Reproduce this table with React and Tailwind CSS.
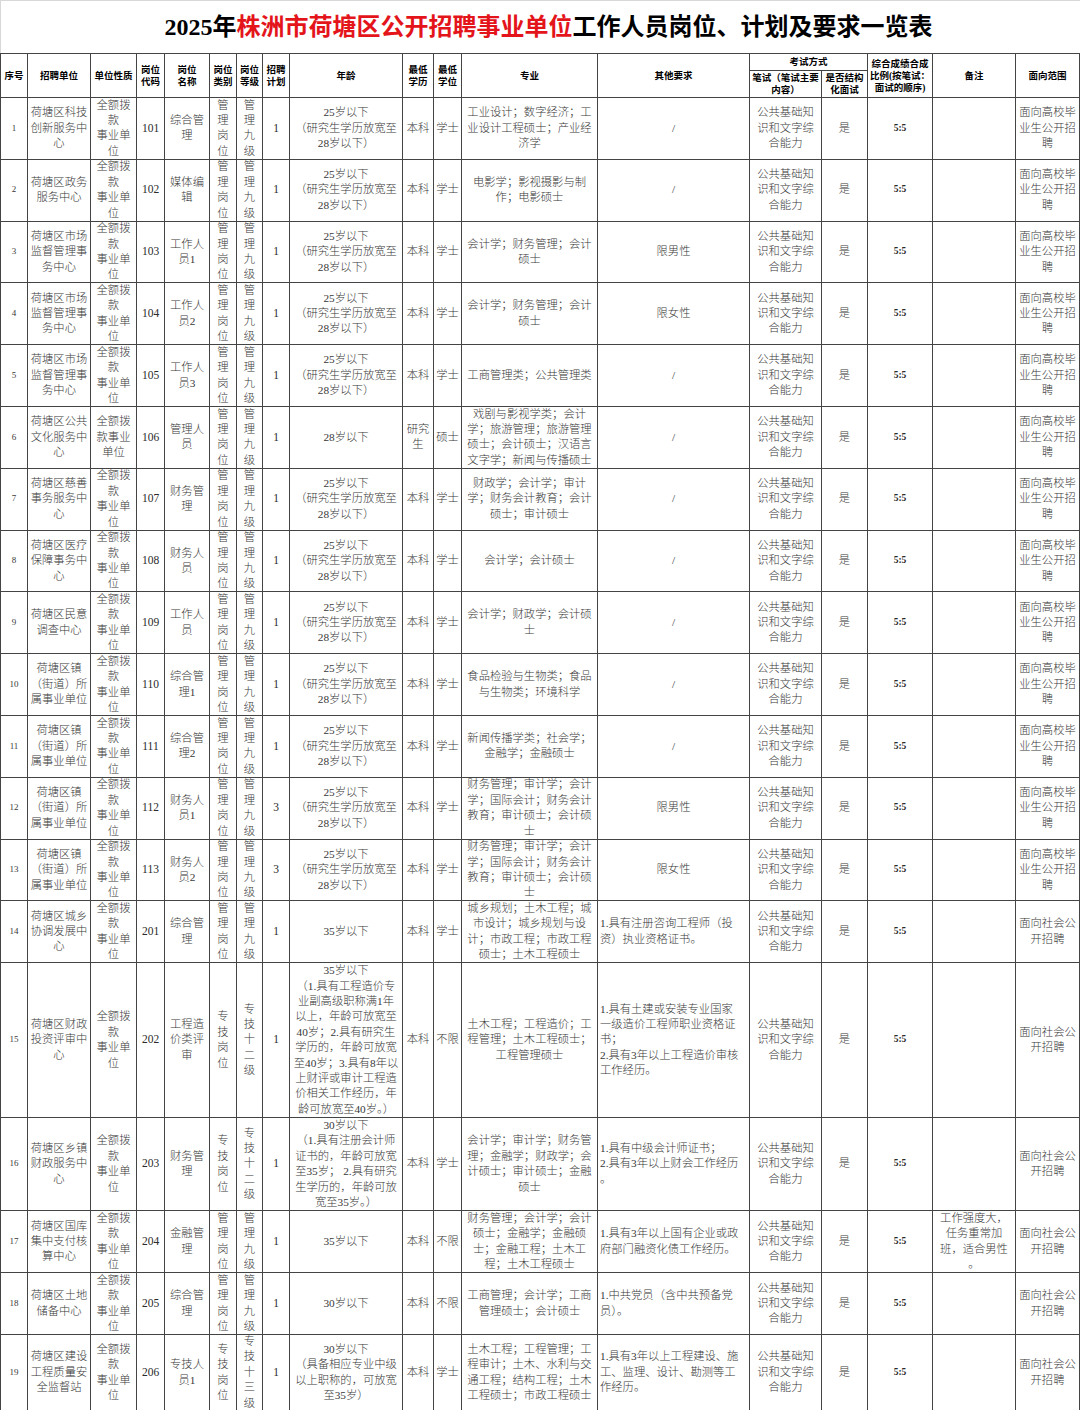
import React from "react";

const FULL = "全额拨\n款\n事业单\n位";
const GL = "管\n理\n岗\n位";
const GJ = "管\n理\n九\n级";
const ZJ = "专\n技\n岗\n位";
const ZJ12 = "专\n技\n十\n二\n级";
const ZJ13 = "专\n技\n十\n三\n级";
const AGE25 = "25岁以下\n（研究生学历放宽至\n28岁以下）";
const EXAM = "公共基础知\n识和文字综\n合能力";
const GX = "面向高校毕\n业生公开招\n聘";
const SH = "面向社会公\n开招聘";
const SCX = "荷塘区市场\n监督管理事\n务中心";
const JD = "荷塘区镇\n（街道）所\n属事业单位";
const CW = "财务管理；审计学；会计\n学；国际会计；财务会计\n教育；审计硕士；会计硕\n士";

const rows = [
  ["1", "荷塘区科技\n创新服务中\n心", FULL, "101", "综合管\n理", GL, GJ, "1", AGE25, "本科", "学士", "工业设计；数字经济；工\n业设计工程硕士；产业经\n济学", "/", EXAM, "是", "5:5", "", GX],
  ["2", "荷塘区政务\n服务中心", FULL, "102", "媒体编\n辑", GL, GJ, "1", AGE25, "本科", "学士", "电影学；影视摄影与制\n作；电影硕士", "/", EXAM, "是", "5:5", "", GX],
  ["3", SCX, FULL, "103", "工作人\n员1", GL, GJ, "1", AGE25, "本科", "学士", "会计学；财务管理；会计\n硕士", "限男性", EXAM, "是", "5:5", "", GX],
  ["4", SCX, FULL, "104", "工作人\n员2", GL, GJ, "1", AGE25, "本科", "学士", "会计学；财务管理；会计\n硕士", "限女性", EXAM, "是", "5:5", "", GX],
  ["5", SCX, FULL, "105", "工作人\n员3", GL, GJ, "1", AGE25, "本科", "学士", "工商管理类；公共管理类", "/", EXAM, "是", "5:5", "", GX],
  ["6", "荷塘区公共\n文化服务中\n心", "全额拨\n款事业\n单位", "106", "管理人\n员", GL, GJ, "1", "28岁以下", "研究\n生", "硕士", "戏剧与影视学类；会计\n学；旅游管理；旅游管理\n硕士；会计硕士；汉语言\n文字学；新闻与传播硕士", "/", EXAM, "是", "5:5", "", GX],
  ["7", "荷塘区慈善\n事务服务中\n心", FULL, "107", "财务管\n理", GL, GJ, "1", AGE25, "本科", "学士", "财政学；会计学；审计\n学；财务会计教育；会计\n硕士；审计硕士", "/", EXAM, "是", "5:5", "", GX],
  ["8", "荷塘区医疗\n保障事务中\n心", FULL, "108", "财务人\n员", GL, GJ, "1", AGE25, "本科", "学士", "会计学；会计硕士", "/", EXAM, "是", "5:5", "", GX],
  ["9", "荷塘区民意\n调查中心", FULL, "109", "工作人\n员", GL, GJ, "1", AGE25, "本科", "学士", "会计学；财政学；会计硕\n士", "/", EXAM, "是", "5:5", "", GX],
  ["10", JD, FULL, "110", "综合管\n理1", GL, GJ, "1", AGE25, "本科", "学士", "食品检验与生物类；食品\n与生物类；环境科学", "/", EXAM, "是", "5:5", "", GX],
  ["11", JD, FULL, "111", "综合管\n理2", GL, GJ, "1", AGE25, "本科", "学士", "新闻传播学类；社会学；\n金融学；金融硕士", "/", EXAM, "是", "5:5", "", GX],
  ["12", JD, FULL, "112", "财务人\n员1", GL, GJ, "3", AGE25, "本科", "学士", CW, "限男性", EXAM, "是", "5:5", "", GX],
  ["13", JD, FULL, "113", "财务人\n员2", GL, GJ, "3", AGE25, "本科", "学士", CW, "限女性", EXAM, "是", "5:5", "", GX],
  ["14", "荷塘区城乡\n协调发展中\n心", FULL, "201", "综合管\n理", GL, GJ, "1", "35岁以下", "本科", "学士", "城乡规划；土木工程；城\n市设计；城乡规划与设\n计；市政工程；市政工程\n硕士；土木工程硕士", "1.具有注册咨询工程师（投\n资）执业资格证书。", EXAM, "是", "5:5", "", SH, true],
  ["15", "荷塘区财政\n投资评审中\n心", FULL, "202", "工程造\n价类评\n审", ZJ, ZJ12, "1", "35岁以下\n（1.具有工程造价专\n业副高级职称满1年\n以上，年龄可放宽至\n40岁；2.具有研究生\n学历的，年龄可放宽\n至40岁；3.具有8年以\n上财评或审计工程造\n价相关工作经历，年\n龄可放宽至40岁。）", "本科", "不限", "土木工程；工程造价；工\n程管理；土木工程硕士；\n工程管理硕士", "1.具有土建或安装专业国家\n一级造价工程师职业资格证\n书；\n2.具有3年以上工程造价审核\n工作经历。", EXAM, "是", "5:5", "", SH, true],
  ["16", "荷塘区乡镇\n财政服务中\n心", FULL, "203", "财务管\n理", ZJ, ZJ12, "1", "30岁以下\n（1.具有注册会计师\n证书的，年龄可放宽\n至35岁； 2.具有研究\n生学历的，年龄可放\n宽至35岁。）", "本科", "学士", "会计学；审计学；财务管\n理；金融学；财政学；会\n计硕士；审计硕士；金融\n硕士", "1.具有中级会计师证书；\n2.具有3年以上财会工作经历\n。", EXAM, "是", "5:5", "", SH, true],
  ["17", "荷塘区国库\n集中支付核\n算中心", FULL, "204", "金融管\n理", GL, GJ, "1", "35岁以下", "本科", "不限", "财务管理；会计学；会计\n硕士；金融学；金融硕\n士；金融工程；土木工\n程；土木工程硕士", "1.具有3年以上国有企业或政\n府部门融资化债工作经历。", EXAM, "是", "5:5", "工作强度大，\n任务重常加\n班，适合男性\n。", SH, true],
  ["18", "荷塘区土地\n储备中心", FULL, "205", "综合管\n理", GL, GJ, "1", "30岁以下", "本科", "不限", "工商管理；会计学；工商\n管理硕士；会计硕士", "1.中共党员（含中共预备党\n员）。", EXAM, "是", "5:5", "", SH, true],
  ["19", "荷塘区建设\n工程质量安\n全监督站", FULL, "206", "专技人\n员1", ZJ, ZJ13, "1", "30岁以下\n（具备相应专业中级\n以上职称的，可放宽\n至35岁）", "本科", "学士", "土木工程；工程管理；工\n程审计；土木、水利与交\n通工程；结构工程；土木\n工程硕士；市政工程硕士", "1.具有3年以上工程建设、施\n工、监理、设计、勘测等工\n作经历。", EXAM, "是", "5:5", "", SH, true],
];

const cellBase =
  "flex items-center justify-center text-center whitespace-pre overflow-hidden border-r border-b border-[#444]";
const hdr = cellBase + " text-[9.5px] leading-[12px] font-bold text-black";
const body = " text-[11.3px] leading-[15.4px] text-[#383838] font-light";

function BodyCell({ value, col, left }) {
  let cls = cellBase + body;
  if (col === 0) cls = cellBase + " border-l text-[9px] leading-[15.4px] text-[#383838]";
  if (col === 3 || col === 7) cls = cellBase + " text-[11.5px] leading-[15.4px] text-[#2a2a2a]";
  if (col === 15) cls = cellBase + " text-[9.5px] leading-[15.4px] font-semibold text-[#2a2a2a]";
  if (col === 12 && left)
    cls =
      "flex items-center justify-start text-left whitespace-pre overflow-hidden border-r border-b border-[#444] pl-[2px]" + body;
  return <div className={cls}>{value}</div>;
}

export default function App() {
  return (
    <div className="w-[1080px] h-[1410px] bg-white overflow-hidden font-['Liberation_Serif','Noto_Sans_CJK_SC',serif]">
      <div className="h-[53px] flex items-center justify-center pl-[16px] border-t border-l border-[#d8d8d8]">
        <h1 className="text-[24px] font-bold text-black">
          2025年<span className="text-[#e4141b]">株洲市荷塘区公开招聘事业单位</span>工作人员岗位、计划及要求一览表
        </h1>
      </div>
      <div className="grid grid-cols-[28px_63px_46px_28px_45px_27px_26px_27px_113px_31px_28px_136px_152px_72px_46px_65px_83px_64px] grid-rows-[18px_27px_repeat(14,61.8px)_155px_93px_62px_62px_75.8px]">
        <div className={hdr + " row-span-2 border-l border-t"}>序号</div>
        <div className={hdr + " row-span-2 border-t"}>招聘单位</div>
        <div className={hdr + " row-span-2 border-t"}>单位性质</div>
        <div className={hdr + " row-span-2 border-t"}>{"岗位\n代码"}</div>
        <div className={hdr + " row-span-2 border-t"}>{"岗位\n名称"}</div>
        <div className={hdr + " row-span-2 border-t"}>{"岗位\n类别"}</div>
        <div className={hdr + " row-span-2 border-t"}>{"岗位\n等级"}</div>
        <div className={hdr + " row-span-2 border-t"}>{"招聘\n计划"}</div>
        <div className={hdr + " row-span-2 border-t"}>年龄</div>
        <div className={hdr + " row-span-2 border-t"}>{"最低\n学历"}</div>
        <div className={hdr + " row-span-2 border-t"}>{"最低\n学位"}</div>
        <div className={hdr + " row-span-2 border-t"}>专业</div>
        <div className={hdr + " row-span-2 border-t"}>其他要求</div>
        <div className={hdr + " col-span-2 border-t"}>考试方式</div>
        <div className={hdr + " row-span-2 border-t"}>{"综合成绩合成\n比例(按笔试：\n面试的顺序)"}</div>
        <div className={hdr + " row-span-2 border-t"}>备注</div>
        <div className={hdr + " row-span-2 border-t"}>面向范围</div>
        <div className={hdr}>{"笔试（笔试主要\n内容）"}</div>
        <div className={hdr}>{"是否结构\n化面试"}</div>
        {rows.map((r, i) =>
          r.slice(0, 18).map((v, c) => (
            <BodyCell key={i + "-" + c} value={v} col={c} left={r[18]} />
          ))
        )}
      </div>
    </div>
  );
}
